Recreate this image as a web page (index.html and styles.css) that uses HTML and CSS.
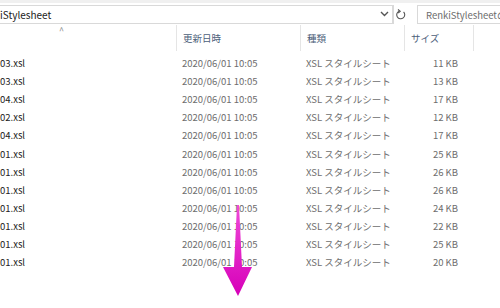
FILE: index.html
```html
<!DOCTYPE html>
<html lang="ja">
<head>
  <meta charset="UTF-8">
  <title>RenkiStylesheet</title>
  <link rel="stylesheet" href="styles.css">
</head>
<body>
  <div class="toolbar">
    <div class="address">
      <span class="path">iStylesheet</span>
      <span class="drop">
        <svg width="9" height="6" viewBox="0 0 9 6"><path d="M1 1 L4.5 4.5 L8 1" fill="none" stroke="#555" stroke-width="1.4"/></svg>
      </span>
    </div>
    <div class="refresh">
      <svg width="10" height="11" viewBox="0 0 10 11"><path d="M3 2.2 A4 4 0 1 0 7.6 3" fill="none" stroke="#555" stroke-width="1.1"/><path d="M2 0.5 L4.2 2.2 L2.2 4" fill="none" stroke="#555" stroke-width="1.1"/></svg>
    </div>
    <div class="search">RenkiStylesheetの検索</div>
  </div>

  <div class="header">
    <div class="col name"><span class="caret">^</span></div>
    <div class="col">更新日時</div>
    <div class="col">種類</div>
    <div class="col">サイズ</div>
    <div class="col"></div>
  </div>

  <div id="rows"></div>

  <svg class="arrow" width="40" height="96" viewBox="0 0 40 96">
    <defs>
      <linearGradient id="g" x1="0" y1="0" x2="0" y2="1">
        <stop offset="0" stop-color="#f04ad9"/>
        <stop offset="1" stop-color="#d600b8"/>
      </linearGradient>
    </defs>
    <polygon points="19,0 21,0 24,62 34,62 20,91 5,62 16,62" fill="url(#g)"/>
  </svg>

  <script>
    const files = [
      ['03.xsl', 11], ['03.xsl', 13], ['04.xsl', 17], ['02.xsl', 12],
      ['04.xsl', 17], ['01.xsl', 25], ['01.xsl', 26], ['01.xsl', 26],
      ['01.xsl', 24], ['01.xsl', 22], ['01.xsl', 25], ['01.xsl', 20]
    ];
    const rows = document.getElementById('rows');
    files.forEach(([name, size]) => {
      const row = document.createElement('div');
      row.className = 'row';
      row.innerHTML = `
        <span class="name">${name}</span>
        <span class="date">2020/06/01 10:05</span>
        <span class="type">XSL スタイルシート</span>
        <span class="size">${size} KB</span>
      `;
      rows.appendChild(row);
    });
  </script>
</body>
</html>
```

FILE: styles.css
```css
* {
  margin: 0;
  padding: 0;
  box-sizing: border-box;
}
body {
  font-family: "Noto Sans CJK JP", "Open Sans", sans-serif;
  font-size: 9.5px;
  color: #333;
  background: #fff;
  width: 500px;
  height: 308px;
  overflow: hidden;
  position: relative;
}
.toolbar {
  display: flex;
  align-items: center;
  gap: 9px;
  height: 25px;
  padding: 3px 0 3px 0;
  background: #fff;
  border-top: 3px solid #f0f0f0;
}
.address {
  display: flex;
  align-items: center;
  width: 394px;
  height: 19px;
  border: 1px solid #d9d9d9;
  border-left: none;
}
.path {
  flex: 1;
  color: #222;
  font-size: 10px;
}
.drop {
  width: 16px;
  display: flex;
  justify-content: center;
  border-right: 1px solid #d9d9d9;
  height: 17px;
  align-items: center;
}
.refresh {
  margin-left: -9px;
  width: 14px;
  display: flex;
  justify-content: center;
}
.search {
  flex: 1;
  height: 19px;
  border: 1px solid #d9d9d9;
  border-right: none;
  color: #6d6d6d;
  padding: 2px 0 0 8px;
  white-space: nowrap;
  overflow: hidden;
}
.header {
  display: grid;
  grid-template-columns: 176px 124px 104px 69px 1fr;
  height: 26px;
}
.header .col {
  border-left: 1px solid #e5e5e5;
  padding: 6px 0 0 6px;
  color: #4c607a;
}
.header .col.name {
  border-left: none;
  position: relative;
}
.caret {
  position: absolute;
  left: 59px;
  top: -1px;
  color: #888;
  font-size: 9px;
}
#rows {
  padding-top: 3px;
}
.row {
  display: grid;
  grid-template-columns: 176px 124px 104px 54px;
  height: 18.1px;
  align-items: center;
}
.row .name {
  color: #222;
}
.row .date, .row .type, .row .size {
  color: #6d6d6d;
}
.row .date, .row .type {
  padding-left: 6px;
}
.row .size {
  text-align: right;
}
.arrow {
  position: absolute;
  left: 218px;
  top: 205px;
}
```
